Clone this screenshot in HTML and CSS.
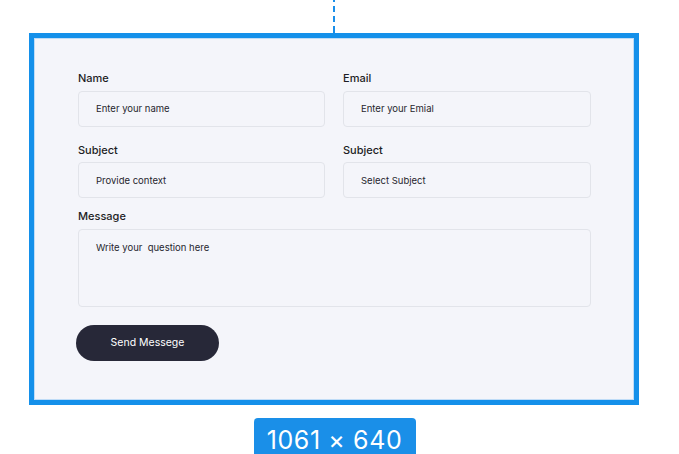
FILE: index.html
```html
<!DOCTYPE html>
<html lang="en">
<head>
<meta charset="utf-8">
<title>Contact form</title>
<link rel="stylesheet" href="styles.css">
</head>
<body>
<div class="stage">
  <div class="guide"></div>
  <div class="frame">
    <form class="form">
      <div class="grid">
        <div class="field">
          <label class="label">Name</label>
          <div class="input">Enter your name</div>
        </div>
        <div class="field">
          <label class="label">Email</label>
          <div class="input">Enter your Emial</div>
        </div>
        <div class="field">
          <label class="label">Subject</label>
          <div class="input">Provide context</div>
        </div>
        <div class="field">
          <label class="label">Subject</label>
          <div class="input">Select Subject</div>
        </div>
      </div>
      <div class="field message">
        <label class="label label-msg">Message</label>
        <div class="input textarea">Write your&nbsp; question here</div>
      </div>
      <button type="button" class="btn">Send Messege</button>
    </form>
  </div>
  <div class="badge">1061 × 640</div>
</div>
</body>
</html>
```
FILE: styles.css
```css
* { box-sizing: border-box; }
html, body { margin: 0; padding: 0; background: #ffffff; }
body { width: 679px; height: 454px; overflow: hidden; font-family: Inter, "Noto Sans", sans-serif; }

.stage {
  width: 610px;
  margin-left: 29px;
  display: flex;
  flex-direction: column;
  align-items: center;
}

.guide {
  width: 2px;
  height: 33px;
  margin-left: -1px;
  background: repeating-linear-gradient(to bottom, #1a8ee9 0 6px, transparent 6px 10px);
  background-position: 0 -4px;
}

.frame {
  width: 610px;
  height: 372px;
  border: 5px solid #1490ea;
  background: #f4f5fa;
  box-shadow: inset 0 0 0 1px #bfdcf7;
}

.form {
  padding: 32px 43px 0 44px;
  display: flex;
  flex-direction: column;
  align-items: flex-start;
}

.grid {
  width: 100%;
  display: grid;
  grid-template-columns: 247px 1fr;
  column-gap: 18px;
  row-gap: 15px;
}

.field { display: flex; flex-direction: column; }

.label {
  font-size: 11px;
  line-height: 16px;
  font-weight: 500;
  color: #1d1d24;
  margin-bottom: 4.5px;
}

.input {
  height: 36px;
  border: 1px solid #e2e4ea;
  border-radius: 4px;
  background: #f4f5fa;
  padding-left: 17px;
  display: flex;
  align-items: center;
  font-size: 9.5px;
  color: #26262e;
}

.message { width: 100%; margin-top: 9.5px; }
.label-msg { margin-bottom: 5.5px; }

.textarea {
  height: 77.5px;
  align-items: flex-start;
  padding-top: 11px;
  line-height: 13px;
}

.btn {
  margin-top: 18px;
  margin-left: -2px;
  width: 143px;
  height: 36px;
  border: none;
  border-radius: 18px;
  background: #272838;
  color: #ffffff;
  font-family: inherit;
  font-size: 10.5px;
  font-weight: 400;
  padding: 0;
  text-align: center;
}

.badge {
  margin-top: 13px;
  margin-left: 1px;
  width: 162px;
  height: 42px;
  border-radius: 4px;
  background: #1a8fe8;
  color: #ffffff;
  font-size: 25px;
  line-height: 26px;
  padding-top: 9px;
  text-align: center;
  letter-spacing: 0.6px;
}
```
